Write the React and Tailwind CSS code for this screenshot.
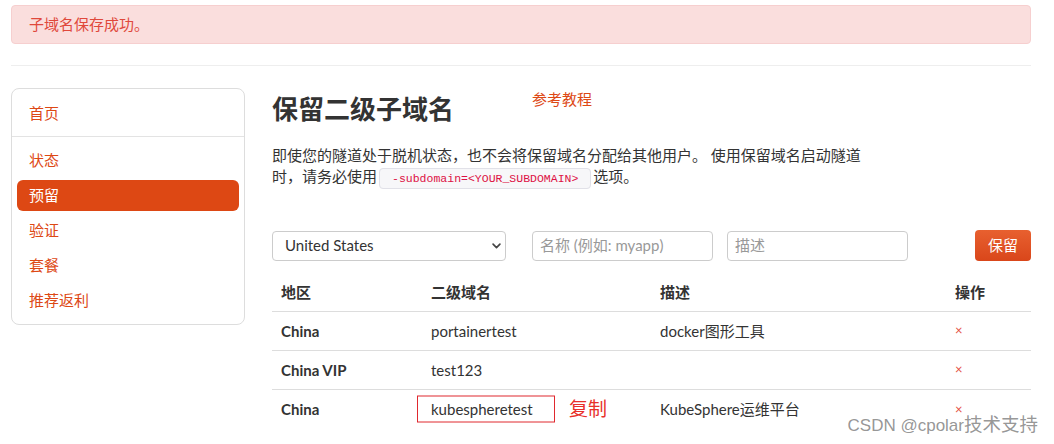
import React from "react";

const font = { fontFamily: "Lato, 'Noto Sans CJK SC', sans-serif" };

const navItems = ["状态", "预留", "验证", "套餐", "推荐返利"];

const rows = [
  { region: "China", name: "portainertest", desc: "docker图形工具" },
  { region: "China VIP", name: "test123", desc: "" },
  { region: "China", name: "kubespheretest", desc: "KubeSphere运维平台", marked: true },
];

function Sidebar() {
  return (
    <div className="w-[234px] shrink-0 self-start rounded-lg border border-[#dddddd] text-[15px]">
      <div className="px-[5px] pt-[9px] pb-[7px] border-b border-[#e3e3e3]">
        <div className="h-[31px] flex items-center px-3 text-[#dd4814]">首页</div>
      </div>
      <div className="px-[5px] pt-[8px] pb-[8px] flex flex-col gap-1">
        {navItems.map((item) => (
          <div
            key={item}
            className={
              item === "预留"
                ? "h-[31px] flex items-center px-3 rounded-md bg-[#dd4814] text-white"
                : "h-[31px] flex items-center px-3 text-[#dd4814]"
            }
          >
            {item}
          </div>
        ))}
      </div>
    </div>
  );
}

function Chevron() {
  return (
    <svg width="11" height="11" viewBox="0 0 16 16" fill="none" stroke="#444" strokeWidth="2.4" strokeLinecap="round" strokeLinejoin="round">
      <path d="M3 6l5 5 5-5" />
    </svg>
  );
}

export default function App() {
  return (
    <div className="relative min-h-[444px] bg-white text-[#333333] overflow-hidden" style={font}>
      <div className="pl-[11px] pr-[23px] pt-[5px]">
        {/* alert */}
        <div className="h-[39px] flex items-center px-[17px] rounded border border-[#f6cfcf] bg-[#fadedd] text-[15px] text-[#e0483b]">
          子域名保存成功。
        </div>
        <div className="mt-[21px] border-t border-[#eeeeee]" />

        <div className="mt-[22px] flex gap-[27px]">
          <Sidebar />

          <div className="flex-1">
            <div className="flex items-start">
              <h1 className="mt-[5px] text-[26px] leading-[32px] font-bold text-[#333333]">保留二级子域名</h1>
              <a className="ml-[78px] text-[15px] leading-[22px] text-[#dd4814]">参考教程</a>
            </div>
            <p className="mt-[20px] w-[600px] text-[15px] leading-[21px] text-[#333333]">
              即使您的隧道处于脱机状态，也不会将保留域名分配给其他用户。 使用保留域名启动隧道时，请务必使用
              <code
                className="mx-[2px] px-3 py-[3px] rounded border border-[#e1e1e8] bg-[#f7f7f9] text-[11.5px] text-[#dd1144]"
                style={{ fontFamily: "'Liberation Mono', monospace" }}
              >
                -subdomain=&lt;YOUR_SUBDOMAIN&gt;
              </code>
              选项。
            </p>

            {/* form */}
            <div className="mt-[41px] flex items-center text-[15px]">
              <div className="w-[234px] h-[30px] flex items-center justify-between pl-3 pr-[3px] rounded border border-[#cccccc] text-[#333333]">
                <span>United States</span>
                <Chevron />
              </div>
              <div className="ml-[26px] w-[181px] h-[30px] flex items-center px-[7px] rounded border border-[#cccccc] text-[#999999]">
                名称 (例如: myapp)
              </div>
              <div className="ml-[14px] w-[181px] h-[30px] flex items-center px-[7px] rounded border border-[#cccccc] text-[#999999]">
                描述
              </div>
              <button className="ml-auto w-[56px] h-[31px] rounded bg-gradient-to-b from-[#e8602f] to-[#d9461a] text-white text-[15px]">
                保留
              </button>
            </div>

            {/* table */}
            <div className="mt-[12px] text-[15px]">
              <div className="h-[39px] flex items-center font-bold border-b border-[#dddddd]">
                <div className="w-[150px] pl-[9px]">地区</div>
                <div className="w-[229px] pl-[9px]">二级域名</div>
                <div className="w-[295px] pl-[9px]">描述</div>
                <div className="flex-1 pl-[9px]">操作</div>
              </div>
              {rows.map((row, i) => (
                <div
                  key={i}
                  className={
                    i < rows.length - 1
                      ? "h-[39px] flex items-center border-b border-[#dddddd]"
                      : "h-[39px] flex items-center"
                  }
                >
                  <div className="w-[150px] pl-[9px] font-bold">{row.region}</div>
                  <div className="w-[229px] pl-[9px]">
                    <span className="relative">
                      {row.name}
                      {row.marked && (
                        <>
                          <span className="absolute left-[-14px] top-1/2 -translate-y-1/2 w-[138px] h-[27px] border-[1.5px] border-[#e0282e]" />
                          <span className="absolute left-[138px] top-[-5px] whitespace-nowrap text-[19px] text-[#e8302a]">复制</span>
                        </>
                      )}
                    </span>
                  </div>
                  <div className="w-[295px] pl-[9px]">{row.desc}</div>
                  <div className="flex-1 pl-[9px] text-[13px] text-[#e4503e]">×</div>
                </div>
              ))}
            </div>
          </div>
        </div>
      </div>

      <div className="absolute right-[16px] top-[411px] text-[17px] text-[#8a8a8a]/90" style={{ fontFamily: "'Liberation Sans', 'Noto Sans CJK SC', sans-serif" }}>
        CSDN @cpolar<span className="text-[18.5px]">技术支持</span>
      </div>
    </div>
  );
}
